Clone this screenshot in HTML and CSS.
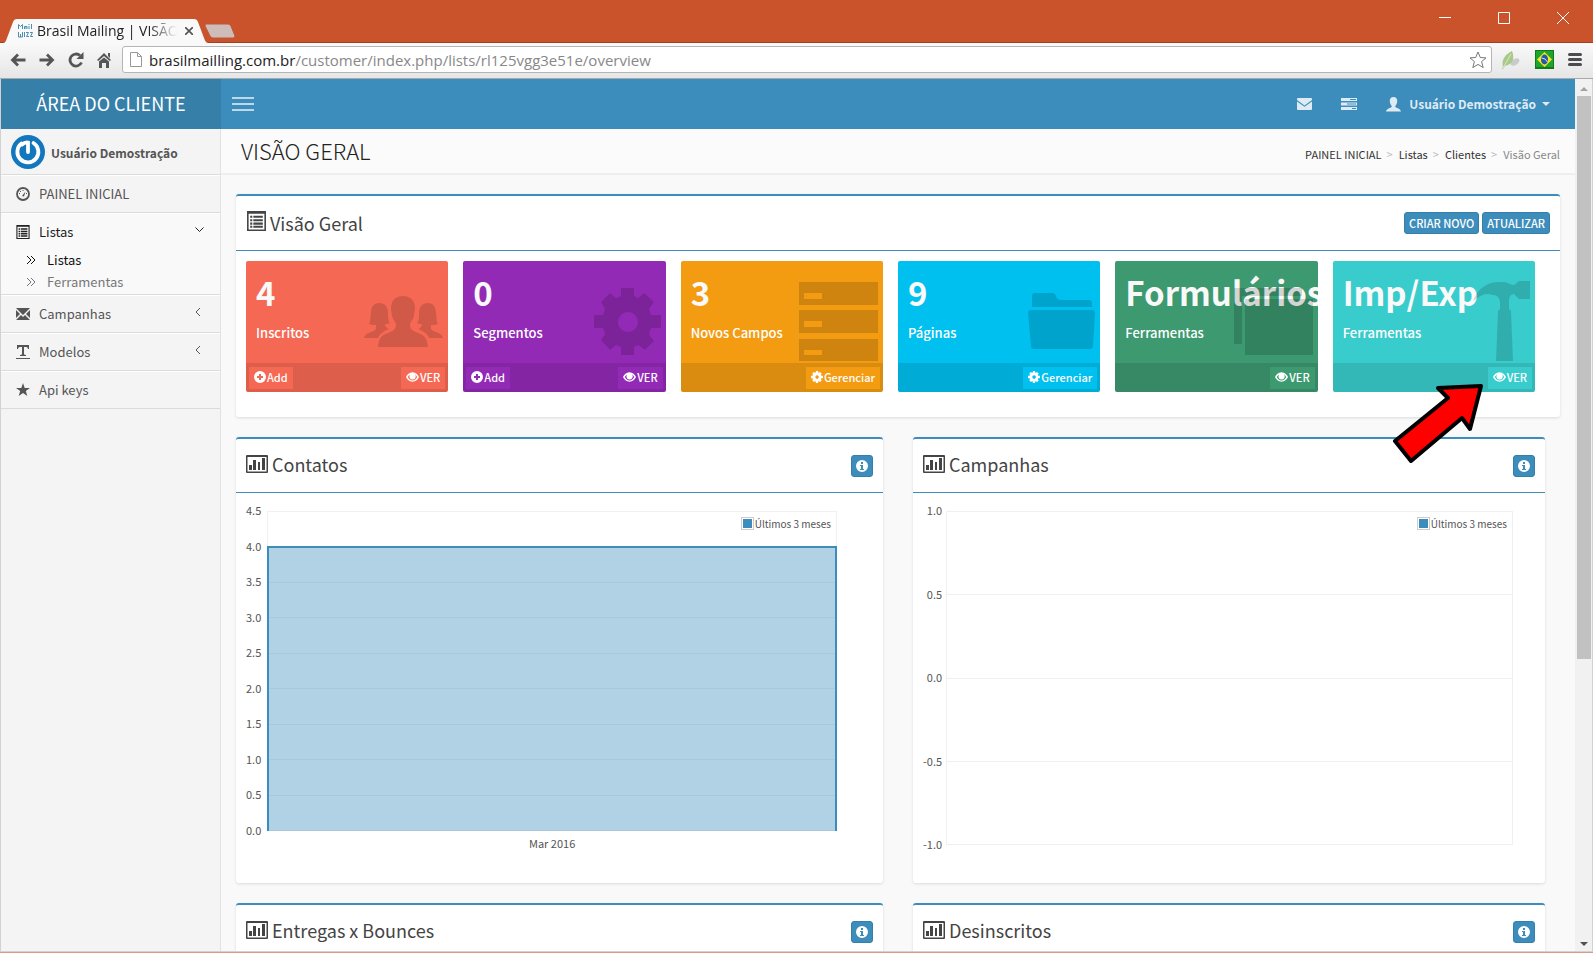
FILE: index.html
```html
<!DOCTYPE html>
<html lang="pt-BR">
<head>
<meta charset="utf-8">
<title>Brasil Mailing | VISÃO GERAL</title>
<link rel="stylesheet" href="styles.css">
</head>
<body>
<svg class="defs" aria-hidden="true">
  <symbol id="i-eye" viewBox="0 0 14 12"><path fill-rule="evenodd" d="M7 1C3.500 1 1.200 3.400 0 6c1.200 2.600 3.500 5 7 5s5.800-2.400 7-5C12.800 3.400 10.500 1 7 1zM2 6C2.600 4.700 3.400 3.600 4.400 3A3.600 3.600 0 0 0 7 8.800 3.600 3.600 0 0 0 9.800 3C10.700 3.600 11.500 4.700 12 6c-1.100 2.200-2.700 3.700-5 3.700S3.100 8.200 2 6z"/><circle cx="7" cy="4.600" r="2.300"/></symbol>
  <symbol id="i-plus" viewBox="0 0 12 12"><path fill-rule="evenodd" d="M6 0a6 6 0 1 0 0 12A6 6 0 0 0 6 0zM5 3h2v2h2v2H7v2H5V7H3V5h2z"/></symbol>
  <symbol id="i-cog" viewBox="13 7 67 67"><path fill-rule="evenodd" d="M40 7h13v8l4 2 6-5 10 9-5 7 2 6h10v13H70l-2 6 5 7-9 9-7-5-4 2v8H40v-8l-5-2-6 5-9-10 4-6-2-6h-9V34h9l2-6-4-7 9-9 6 5 5-2zM47 31a10 10 0 1 0 0 20a10 10 0 0 0 0-20z"/></symbol>
  <symbol id="i-chart" viewBox="0 0 22 18"><path fill-rule="evenodd" d="M1 0h20a1 1 0 0 1 1 1v16a1 1 0 0 1-1 1H1a1 1 0 0 1-1-1V1a1 1 0 0 1 1-1zM1.500 2v14.500h19V2z"/><path d="M3 10h3v5H3zM7 5h3v10H7zM12 7h2v8h-2zM16 3h3v12h-3z"/></symbol>
  <symbol id="i-list" viewBox="0 0 18 19"><path fill-rule="evenodd" d="M0 0h18v19H0zM1.500 2.500v15h15v-15z"/><path d="M3 4.500h2v2H3zM6 4.500h9v2H6zM3 7.800h2v2H3zM6 7.800h9v2H6zM3 11h2v2H3zM6 11h9v2H6zM3 14h2v2H3zM6 14h9v2H6z"/></symbol>
  <symbol id="i-info" viewBox="0 0 12 12"><path fill-rule="evenodd" d="M6 0a6 6 0 1 0 0 12A6 6 0 0 0 6 0zM5 2h2v2H5zM4 5h3v4h1v1H4V9h1V6H4z"/></symbol>
  <symbol id="i-left" viewBox="0 0 6 10"><path d="M5 1L1 5l4 4" fill="none" stroke="currentColor"/></symbol>
  <symbol id="i-raquo" viewBox="0 0 8 8"><path d="M0 0l4 4-4 4M4 0l4 4-4 4" fill="none" stroke="currentColor"/></symbol>
</svg>

<div class="titlebar">
  <div class="tab">
    <svg class="tab-shape" viewBox="0 0 206 24" preserveAspectRatio="none" aria-hidden="true"><path d="M0 24C2 24 3 22 4 19L10 3Q11 0 14 0H191Q194 0 195 3L201 19C202 22 203 24 206 24z" fill="#f9f9f9"/></svg>
    <svg class="favicon" viewBox="0 0 16 16" aria-hidden="true"><g fill="none" stroke="#4a8fb0"><path d="M1.500 6V1.500l2 2 2-2V6M7.500 6V3.500h2.500V6M7.500 5h2M12 3v3M12 1v1M14.500 1v5M1.500 9v5h4V9M3.500 11v3M7.500 9v5M9 9.500h2.500l-2 4h2.500M13 9.500h2.500l-2 4H16"/></g></svg>
    <span class="tab-title">Brasil Mailing | VISÃO</span>
    <button class="tab-close" aria-label="Fechar guia"><svg width="8" height="8" viewBox="0 0 8 8"><path d="M0 0l8 8M8 0L0 8" stroke="#555" stroke-width="1.700"/></svg></button>
  </div>
  <button class="new-tab" aria-label="Nova guia"><svg width="32" height="16" viewBox="0 0 32 16"><path d="M2 1h22q2 0 3 2l4 10q0 2-2 2H9q-2 0-3-2L1 3q0-2 1-2z" fill="#cfbcb9" stroke="#b8593a"/></svg></button>
  <div class="window-buttons">
    <button aria-label="Minimizar"><svg width="12" height="12" viewBox="0 0 12 12"><path d="M0 5.500h12" stroke="#fff"/></svg></button>
    <button aria-label="Maximizar"><svg width="12" height="12" viewBox="0 0 12 12"><path d="M.5.500h11v11H.5z" fill="none" stroke="#fff"/></svg></button>
    <button aria-label="Fechar"><svg width="12" height="12" viewBox="0 0 12 12"><path d="M0 0l12 12M12 0L0 12" stroke="#fff"/></svg></button>
  </div>
</div>

<div class="toolbar">
  <div class="nav-buttons">
    <button aria-label="Voltar"><svg width="16" height="14" viewBox="0 0 16 14"><path d="M15.500 7H3M8 1.500L2.500 7 8 12.500" fill="none" stroke="#555" stroke-width="2.800"/></svg></button>
    <button aria-label="Avançar"><svg width="16" height="14" viewBox="0 0 16 14"><path d="M.5 7H13M8 1.500L13.500 7 8 12.500" fill="none" stroke="#555" stroke-width="2.800"/></svg></button>
    <button aria-label="Recarregar"><svg width="16" height="16" viewBox="0 0 16 16"><path d="M13.500 10.500A6 6 0 1 1 12 3.500" fill="none" stroke="#555" stroke-width="2.800"/><path d="M15.500 0v7H8.500z" fill="#555"/></svg></button>
    <button aria-label="Página inicial"><svg width="14" height="16" viewBox="0 0 14 16"><path d="M7 1l7 7-1.300 1L7 4 1.300 9 0 8zM11 1h2v5l-2-2zM2 9.500l5-4 5 4V16H9v-5H5v5H2z" fill="#555"/></svg></button>
  </div>
  <div class="omnibox">
    <svg width="12" height="15" viewBox="0 0 12 15" aria-hidden="true"><path d="M.5.500h7l4 4v10H.5zM7.500.500v4h4" fill="#fff" stroke="#999"/></svg>
    <span class="url">brasilmailling.com.br<span class="url-path">/customer/index.php/lists/rl125vgg3e51e/overview</span></span>
    <button aria-label="Favoritar"><svg width="18" height="18" viewBox="0 0 18 18"><path d="M9 1l2.300 5.500 5.700.4-4.400 3.700 1.600 6L9 13.400l-5.200 3.200 1.600-6L1 6.900l5.700-.4z" fill="#fff" stroke="#777" stroke-linejoin="round"/></svg></button>
  </div>
  <button aria-label="Extensão"><svg width="20" height="20" viewBox="0 0 20 20"><ellipse cx="14" cy="12" rx="5" ry="3" fill="#c9cbc8" transform="rotate(-35 14 12)"/><path d="M2 17C0 9 5 4 11 1c3 8 1 13-7 15l-2 3H1z" fill="#a8c98a"/><path d="M2 18L10 4" stroke="#d8e8c6"/></svg></button>
  <button aria-label="Brasil"><svg width="19" height="19" viewBox="0 0 19 19"><path d="M0 0h19v19H0z" fill="#137a1b"/><path d="M1 1h17v16H1z" fill="#1fa52b"/><path d="M9.500 2L17 9.500 9.500 17 2 9.500z" fill="#f5e52a"/><ellipse cx="9.500" cy="9.500" rx="3.500" ry="5" fill="#2558a5"/><path d="M6.500 8q4 0 6 4" stroke="#cfe0f0" fill="none"/></svg></button>
  <button aria-label="Menu"><svg width="14" height="13" viewBox="0 0 14 13"><path d="M1.500 1.500h11M1.500 6.500h11M1.500 11.500h11" stroke="#4c4c50" stroke-width="3" stroke-linecap="round"/></svg></button>
</div>

<div class="viewport">
  <div class="page">
    <header class="main-header">
      <a class="logo" href="#">ÁREA DO CLIENTE</a>
      <nav class="navbar">
        <button class="toggle" aria-label="Alternar menu"><svg width="22" height="14" viewBox="0 0 22 14"><path d="M0 1h22M0 7h22M0 13h22" stroke="#e8f1f7" stroke-width="1.500"/></svg></button>
        <a class="nav-icon" href="#" aria-label="Mensagens"><svg width="15" height="12" viewBox="0 0 15 12"><path d="M0 1q0-1 1-1h13q1 0 1 1v1L7.500 7.500 0 2zM0 3.500l7.500 5.300L15 3.500V11q0 1-1 1H1q-1 0-1-1z"/></svg></a>
        <a class="nav-icon" href="#" aria-label="Tarefas"><svg width="16" height="12" viewBox="0 0 16 12"><path fill-rule="evenodd" d="M0 0h16v3H0zM9 1v1h6V1zM0 4.500h16v3H0zM6 5.500v1h9v-1zM0 9h16v3H0zM11 10v1h4v-1z"/></svg></a>
        <a class="user-menu" href="#"><svg width="15" height="15" viewBox="0 0 15 15"><path d="M7.500 0C10 0 11.500 1.500 11.200 4.500 11 7 10 8 9.300 9v1c1 1 5.200 1.500 5.700 4.500H0C.5 11.500 4.700 11 5.700 10V9C5 8 4 7 3.800 4.500 3.500 1.500 5 0 7.500 0z"/></svg><span>Usuário Demostração</span><svg width="8" height="4" viewBox="0 0 8 4"><path d="M0 0h8L4 4z"/></svg></a>
      </nav>
    </header>

    <div class="wrapper">
      <aside class="sidebar">
        <div class="user-panel">
          <svg width="34" height="34" viewBox="0 0 34 34" aria-hidden="true"><circle cx="17" cy="17" r="17" fill="#1277bc"/><path d="M10.500 8.500A10.500 10.500 0 1 0 22.500 8" fill="none" stroke="#fff" stroke-width="3.800" stroke-linecap="round"/><path d="M11 9.500Q14 7 17 7.500V17" fill="none" stroke="#fff" stroke-width="3.800" stroke-linecap="round"/></svg>
          <span>Usuário Demostração</span>
        </div>
        <ul class="menu">
          <li><a href="#"><svg class="mi" viewBox="0 0 14 14"><circle cx="7" cy="7" r="6" fill="none" stroke="currentColor" stroke-width="1.800"/><path d="M6 9l3.500-4.500L8 9.500zM3 6h1v1H3zM4 4h1v1H4zM6.500 3h1v1h-1zM10 6h1v1h-1z"/></svg>PAINEL INICIAL</a></li>
          <li class="active"><a href="#"><svg class="mi"><use href="#i-list"/></svg>Listas<svg class="caret" width="9" height="6" viewBox="0 0 9 6"><path d="M.5.500l4 4 4-4" fill="none" stroke="currentColor"/></svg></a>
            <ul class="submenu">
              <li class="current"><a href="#"><svg width="8" height="8" viewBox="0 0 8 8"><use href="#i-raquo"/></svg>Listas</a></li>
              <li><a href="#"><svg width="8" height="8" viewBox="0 0 8 8"><use href="#i-raquo"/></svg>Ferramentas</a></li>
            </ul>
          </li>
          <li><a href="#"><svg class="mi" viewBox="0 0 14 14"><path d="M0 1h14L7 8zM0 3l4 4-4 4zM14 3l-4 4 4 4zM0 13l5-5 2 2 2-2 5 5z"/></svg>Campanhas<svg class="caret" width="9" height="10" viewBox="0 0 9 10"><use href="#i-left" width="6" height="10"/></svg></a></li>
          <li><a href="#"><svg class="mi" viewBox="0 0 14 14"><path d="M1 0h12v4h-1q0-2-2-2H8v7q0 1 2 1v1H4v-1q2 0 2-1V2H4Q2 2 2 4H1zM0 13h14v1H0z"/></svg>Modelos<svg class="caret" width="9" height="10" viewBox="0 0 9 10"><use href="#i-left" width="6" height="10"/></svg></a></li>
          <li><a href="#"><svg class="mi" viewBox="0 0 14 14"><path d="M7 0l1.700 5H14L9.800 8l1.500 5L7 10l-4.300 3 1.500-5L0 5h5.300z"/></svg>Api keys</a></li>
        </ul>
      </aside>

      <main class="content">
        <div class="content-header">
          <h1>VISÃO GERAL</h1>
          <ol class="breadcrumb"><li><a href="#">PAINEL INICIAL</a></li><li><a href="#">Listas</a></li><li><a href="#">Clientes</a></li><li>Visão Geral</li></ol>
        </div>
        <div class="boxes">
          <section class="box overview">
            <div class="box-header"><svg width="19" height="20"><use href="#i-list"/></svg><h2>Visão Geral</h2><div class="tools"><button class="btn">CRIAR NOVO</button><button class="btn">ATUALIZAR</button></div></div>
            <div class="cards">
              <article class="card red"><div class="inner"><h3>4</h3><p>Inscritos</p></div>
                <svg class="art" viewBox="0 0 80 80"><path d="M40 15c8 0 12 5 12 12 0 4-1 5-1 8-1 4-3 5-4 8 0 6 3 7 8 9s9 3 10 14H15c1-11 5-12 10-14s8-3 8-9c-1-3-3-4-4-8 0-3-1-4-1-8 0-7 4-12 12-12z"/><path d="M16 22c6 0 9 4 9 10 0 5 0 8 2 10-2 1-4 1-5 1 0 3 2 4 4 5-5 2-9 4-11 9H1c1-6 9-5 12-9v-4c-2 0-5 0-7-1 2-3 1-7 2-11 0-6 3-10 8-10zM65 22c-6 0-9 4-9 10 0 5 0 8-2 10 2 1 4 1 5 1 0 3-2 4-4 5 5 2 9 4 11 9h14c-1-6-9-5-12-9v-4c2 0 5 0 7-1-2-3-1-7-2-11 0-6-3-10-8-10z"/></svg>
                <div class="card-footer"><a href="#"><svg width="12" height="12"><use href="#i-plus"/></svg>Add</a><a class="end" href="#"><svg width="13" height="12"><use href="#i-eye"/></svg>VER</a></div></article>
              <article class="card purple"><div class="inner"><h3>0</h3><p>Segmentos</p></div>
                <svg class="art" viewBox="0 0 80 80"><use href="#i-cog" x="13" y="7" width="67" height="67"/></svg>
                <div class="card-footer"><a href="#"><svg width="12" height="12"><use href="#i-plus"/></svg>Add</a><a class="end" href="#"><svg width="13" height="12"><use href="#i-eye"/></svg>VER</a></div></article>
              <article class="card orange"><div class="inner"><h3>3</h3><p>Novos Campos</p></div>
                <svg class="art" viewBox="0 0 80 80"><path fill-rule="evenodd" d="M1 1h79v23H1zM6 12v6h18v-6zM1 29h79v23H1zM6 40v6h18v-6zM1 58h79v22H1zM6 69v5h18v-5z"/></svg>
                <div class="card-footer"><a class="end" href="#"><svg width="12" height="12"><use href="#i-cog"/></svg>Gerenciar</a></div></article>
              <article class="card blue"><div class="inner"><h3>9</h3><p>Páginas</p></div>
                <svg class="art" viewBox="0 0 80 80"><path d="M17 26V15q0-3 3-3h17q3 0 4 3 1 4 6 4h27q3 0 3 3v4zM16 29h61q3 0 3 3l-2 33q0 3-3 3H19q-3 0-3-3l-3-33q0-3 3-3z"/></svg>
                <div class="card-footer"><a class="end" href="#"><svg width="12" height="12"><use href="#i-cog"/></svg>Gerenciar</a></div></article>
              <article class="card green"><div class="inner"><h3>Formulários</h3><p>Ferramentas</p></div>
                <svg class="art" viewBox="0 0 80 80"><path d="M1 7h68v8H9v48H1zM12 18h68v56H12z"/></svg>
                <div class="card-footer"><a class="end" href="#"><svg width="13" height="12"><use href="#i-eye"/></svg>VER</a></div></article>
              <article class="card teal"><div class="inner"><h3>Imp/Exp</h3><p>Ferramentas</p></div>
                <svg class="art" viewBox="0 0 80 80"><path d="M23 20C29 5 39 0 53 1c6 0 6 3 11 3l5-4h11v18H69l-5-5c-4 0-5 4-5 8v7l2 2 2 50H46l2-50 2-2v-5c0-7-3-9-8-9-6-3-12 1-19 6z"/></svg>
                <div class="card-footer"><a class="end" href="#"><svg width="13" height="12"><use href="#i-eye"/></svg>VER</a></div></article>
            </div>
            <svg class="pointer" width="92" height="80" viewBox="0 0 92 80" aria-hidden="true"><path d="M89 3L46 5l10 10L3 58l16 20 51-43 8 11z" fill="#f00" stroke="#000" stroke-width="4" stroke-linejoin="round"/></svg>
          </section>

          <div class="charts">
            <section class="box">
              <div class="box-header"><svg width="22" height="18"><use href="#i-chart"/></svg><h2>Contatos</h2><div class="tools"><button class="btn info" aria-label="Informações"><svg width="12" height="12"><use href="#i-info"/></svg></button></div></div>
              <div class="chart contacts">
                <div class="ticks"><span>4.5</span><span>4.0</span><span>3.5</span><span>3.0</span><span>2.5</span><span>2.0</span><span>1.5</span><span>1.0</span><span>0.5</span><span>0.0</span></div>
                <div class="plot"><i></i><i></i><i></i><i></i><i></i><i></i><i></i><i></i><i></i><i></i><div class="area"></div><div class="legend"><b></b>Últimos 3 meses</div></div>
                <div class="x-label">Mar 2016</div>
              </div>
            </section>
            <section class="box">
              <div class="box-header"><svg width="22" height="18"><use href="#i-chart"/></svg><h2>Campanhas</h2><div class="tools"><button class="btn info" aria-label="Informações"><svg width="12" height="12"><use href="#i-info"/></svg></button></div></div>
              <div class="chart campaigns">
                <div class="ticks"><span>1.0</span><span>0.5</span><span>0.0</span><span>-0.5</span><span>-1.0</span></div>
                <div class="plot"><i></i><i></i><i></i><i></i><i></i><div class="legend"><b></b>Últimos 3 meses</div></div>
              </div>
            </section>
            <section class="box">
              <div class="box-header"><svg width="22" height="18"><use href="#i-chart"/></svg><h2>Entregas x Bounces</h2><div class="tools"><button class="btn info" aria-label="Informações"><svg width="12" height="12"><use href="#i-info"/></svg></button></div></div>
            </section>
            <section class="box">
              <div class="box-header"><svg width="22" height="18"><use href="#i-chart"/></svg><h2>Desinscritos</h2><div class="tools"><button class="btn info" aria-label="Informações"><svg width="12" height="12"><use href="#i-info"/></svg></button></div></div>
            </section>
          </div>
        </div>
      </main>
    </div>
  </div>
  <div class="scrollbar" aria-hidden="true">
    <svg width="8" height="4" viewBox="0 0 8 4"><path d="M0 4h8L4 0z" fill="#a3a3a3"/></svg>
    <div class="track"><div class="thumb"></div></div>
    <svg width="8" height="4" viewBox="0 0 8 4"><path d="M0 0h8L4 4z" fill="#505050"/></svg>
  </div>
</div>
</body>
</html>
```
FILE: styles.css
```css
* { box-sizing: border-box; }

body {
  margin: 0;
  height: 100vh;
  display: flex;
  flex-direction: column;
  overflow: hidden;
  font-family: "Noto Sans CJK SC", "Open Sans", sans-serif;
  font-size: 13px;
  line-height: 20px;
  color: #444;
  background: #f9f9f9;
  border-bottom: 1px solid #dd9a80;
}

h1, h2, h3, p, ul, ol { margin: 0; padding: 0; font-weight: 400; }
ul, ol { list-style: none; }
a { color: inherit; text-decoration: none; }
button { font: inherit; color: inherit; background: none; border: 0; padding: 0; display: flex; align-items: center; justify-content: center; }
svg { flex: none; fill: currentColor; display: block; }
.defs { position: absolute; width: 0; height: 0; }

/* Browser frame */
.titlebar { flex: none; height: 43px; display: flex; align-items: flex-end; background: #cb532b; border-bottom: 1px solid #a3401f; }
.tab { position: relative; z-index: 1; width: 206px; height: 24px; margin: 0 0 -1px 3px; padding: 0 8px 0 14px; display: flex; align-items: center; }
.tab-shape { position: absolute; inset: 0; width: 100%; height: 100%; z-index: -1; }
.favicon { width: 16px; height: 16px; }
.tab-title {
  flex: 1;
  margin-left: 4px;
  overflow: hidden;
  white-space: nowrap;
  font: 14px/24px "Open Sans", sans-serif;
  color: #222;
  -webkit-mask-image: linear-gradient(to right, #000 80%, transparent);
  mask-image: linear-gradient(to right, #000 80%, transparent);
}
.tab-close { width: 24px; height: 24px; }
.new-tab { margin: 0 0 3px -5px; }
.window-buttons { margin-left: auto; align-self: stretch; display: flex; padding: 0 1px 6px 0; }
.window-buttons button { width: 59px; }

.toolbar { flex: none; height: 36px; display: flex; align-items: center; gap: 14px; padding: 0 11px 2px 10px; background: linear-gradient(#f9f9f9, #e6e6e6); border-bottom: 1px solid #a9a9a9; }
.nav-buttons { display: flex; gap: 13px; margin-right: -3px; }
.omnibox { flex: 1; height: 27px; display: flex; align-items: center; gap: 7px; margin-right: -5px; padding: 0 4px 0 7px; background: #fff; border: 1px solid #b5b5b5; border-radius: 3px; }
.url { flex: 1; font: 15px/24px "Open Sans", sans-serif; color: #222; }
.url-path { color: #888; }

/* Page */
.viewport { flex: 1; min-height: 0; display: flex; border: 1px solid #d2d2d2; border-top: 0; }
.page { flex: 1; min-width: 0; display: flex; flex-direction: column; overflow: hidden; }
.scrollbar { width: 17px; display: flex; flex-direction: column; align-items: center; gap: 5px; padding: 8px 1px 5px 2px; background: #f1f1f1; }
.track { flex: 1; align-self: stretch; }
.thumb { height: 67%; background: #c1c1c1; }

.main-header { display: flex; height: 50px; flex: none; color: #dfebf4; background: #3c8dbc; }
.logo { width: 220px; font-size: 18px; line-height: 48px; text-align: center; color: #fff; background: #367fa9; }
.navbar { flex: 1; display: flex; align-items: center; gap: 29px; padding: 0 25px 0 11px; }
.toggle { margin-right: auto; }
.user-menu { display: flex; align-items: center; gap: 6px; font-size: 12px; font-weight: 700; }
.user-menu span { margin-left: 2px; }

.wrapper { flex: 1; min-height: 0; display: flex; }
.sidebar { flex: none; width: 220px; color: #555; background: #f4f4f4; border-right: 1px solid #e2e2e2; }
.user-panel { height: 45px; display: flex; align-items: center; gap: 6px; padding-left: 10px; font-size: 12px; font-weight: 700; }
.user-panel span { padding-top: 3px; }
.menu { border-top: 1px solid #dbdbdb; }
.menu > li { border-top: 1px solid #fff; border-bottom: 1px solid #dbdbdb; }
.menu > li > a { display: flex; align-items: center; gap: 9px; height: 36px; padding: 0 16px 0 15px; }
.mi { width: 14px; height: 14px; }
.caret { margin-left: auto; margin-bottom: 5px; }
.active { background: #f9f9f9; color: #222; }
.active .submenu { margin-top: -1px; padding-bottom: 1px; }
.submenu li { color: #777; }
.submenu .current { color: #111; }
.submenu a { display: flex; align-items: center; gap: 12px; height: 22px; padding-left: 26px; }

.content { flex: 1; min-width: 0; }
.content-header { height: 46px; display: flex; align-items: center; justify-content: space-between; padding: 0 15px 0 20px; background: #fbfbfb; border-bottom: 2px solid #eee; }
.content-header h1 { font-size: 22px; font-weight: 300; color: #222; line-height: 30px; padding-bottom: 2px; }
.breadcrumb { display: flex; font-size: 11px; color: #888; padding-top: 6px; }
.breadcrumb a { color: #333; }
.breadcrumb li + li::before { content: ">"; color: #bbb; margin: 0 6px 0 5px; }

.boxes { padding: 19px 15px; display: flex; flex-direction: column; gap: 20px; }
.box { position: relative; min-width: 0; background: #fff; border-top: 2px solid #3c8dbc; border-radius: 3px; box-shadow: 0 1px 3px rgba(0, 0, 0, .12); }
.box-header { display: flex; align-items: center; gap: 4px; height: 54px; padding: 0 10px; border-bottom: 1px solid #3c8dbc; }
.box-header > svg { margin-bottom: 4px; }
.box-header h2 { font-size: 18px; font-weight: 400; line-height: 24px; padding-bottom: 4px; }
.tools { margin-left: auto; display: flex; gap: 3px; }
.btn { height: 22px; padding: 0 4px; font-size: 11px; font-weight: 500; color: #fff; background: #3c8dbc; border: 1px solid #367fa9; border-radius: 3px; }
.info { width: 22px; }
.overview { z-index: 1; }
.overview .box-header { height: 55px; padding-left: 11px; }
.overview .box-header h2 { padding-bottom: 0; }

.cards { display: grid; grid-template-columns: repeat(6, minmax(0, 1fr)); gap: 15px; padding: 10px 25px 25px 10px; }
.card { position: relative; overflow: hidden; border-radius: 2px; color: #fff; background: var(--tone); }
.inner { height: 102px; padding: 10px; }
.inner h3 { font-size: 33px; font-weight: 700; line-height: 42px; white-space: nowrap; color: #f9f9f9; }
.inner p { margin-top: 10px; font-weight: 500; }
.art { position: absolute; top: 20px; right: 5px; width: 80px; height: 80px; color: rgba(0, 0, 0, .15); }
.card-footer { display: flex; height: 29px; padding: 4px 3px 3px; background: rgba(0, 0, 0, .1); }
.card-footer a { display: flex; align-items: center; gap: 1px; padding: 0 5px 2px; font-size: 11px; font-weight: 500; background: var(--tone); }
.card-footer .end { margin-left: auto; }
.red { --tone: #f56954; }
.purple { --tone: #932ab6; }
.orange { --tone: #f39c12; }
.blue { --tone: #00c0ef; }
.green { --tone: #3d9970; }
.teal { --tone: #39cccc; }
.pointer { position: absolute; right: 76px; top: 187px; }

.charts { display: grid; grid-template-columns: 647fr 632fr; gap: 20px 30px; padding-right: 15px; }
.chart { display: grid; grid-template-columns: auto 1fr; gap: 0 6px; height: 390px; padding: 18px 32px 0 10px; font-size: 11px; line-height: 12px; color: #545454; }
.contacts { grid-template-rows: 320px 1fr; padding-right: 46px; }
.campaigns { grid-template-rows: 334px 1fr; column-gap: 4px; }
.ticks { display: flex; flex-direction: column; justify-content: space-between; text-align: right; margin: -7px 0 -5px; }
.plot { position: relative; display: flex; flex-direction: column; justify-content: space-between; border: solid #f0f0f0; border-width: 0 1px; }
.plot i { height: 1px; background: #f0f0f0; }
.area { position: absolute; inset: 11% -1px 0; background: rgba(60, 141, 188, .4); border: 2px solid #3c8dbc; border-bottom: 0; }
.legend { position: absolute; top: 6px; right: 5px; display: flex; align-items: center; gap: 1px; font-size: 10px; }
.legend b { width: 13px; height: 13px; border: 1px solid #ccc; background: #3c8dbc; box-shadow: inset 0 0 0 1px #fff; }
.x-label { grid-column: 2; text-align: center; padding-top: 6px; }
```
